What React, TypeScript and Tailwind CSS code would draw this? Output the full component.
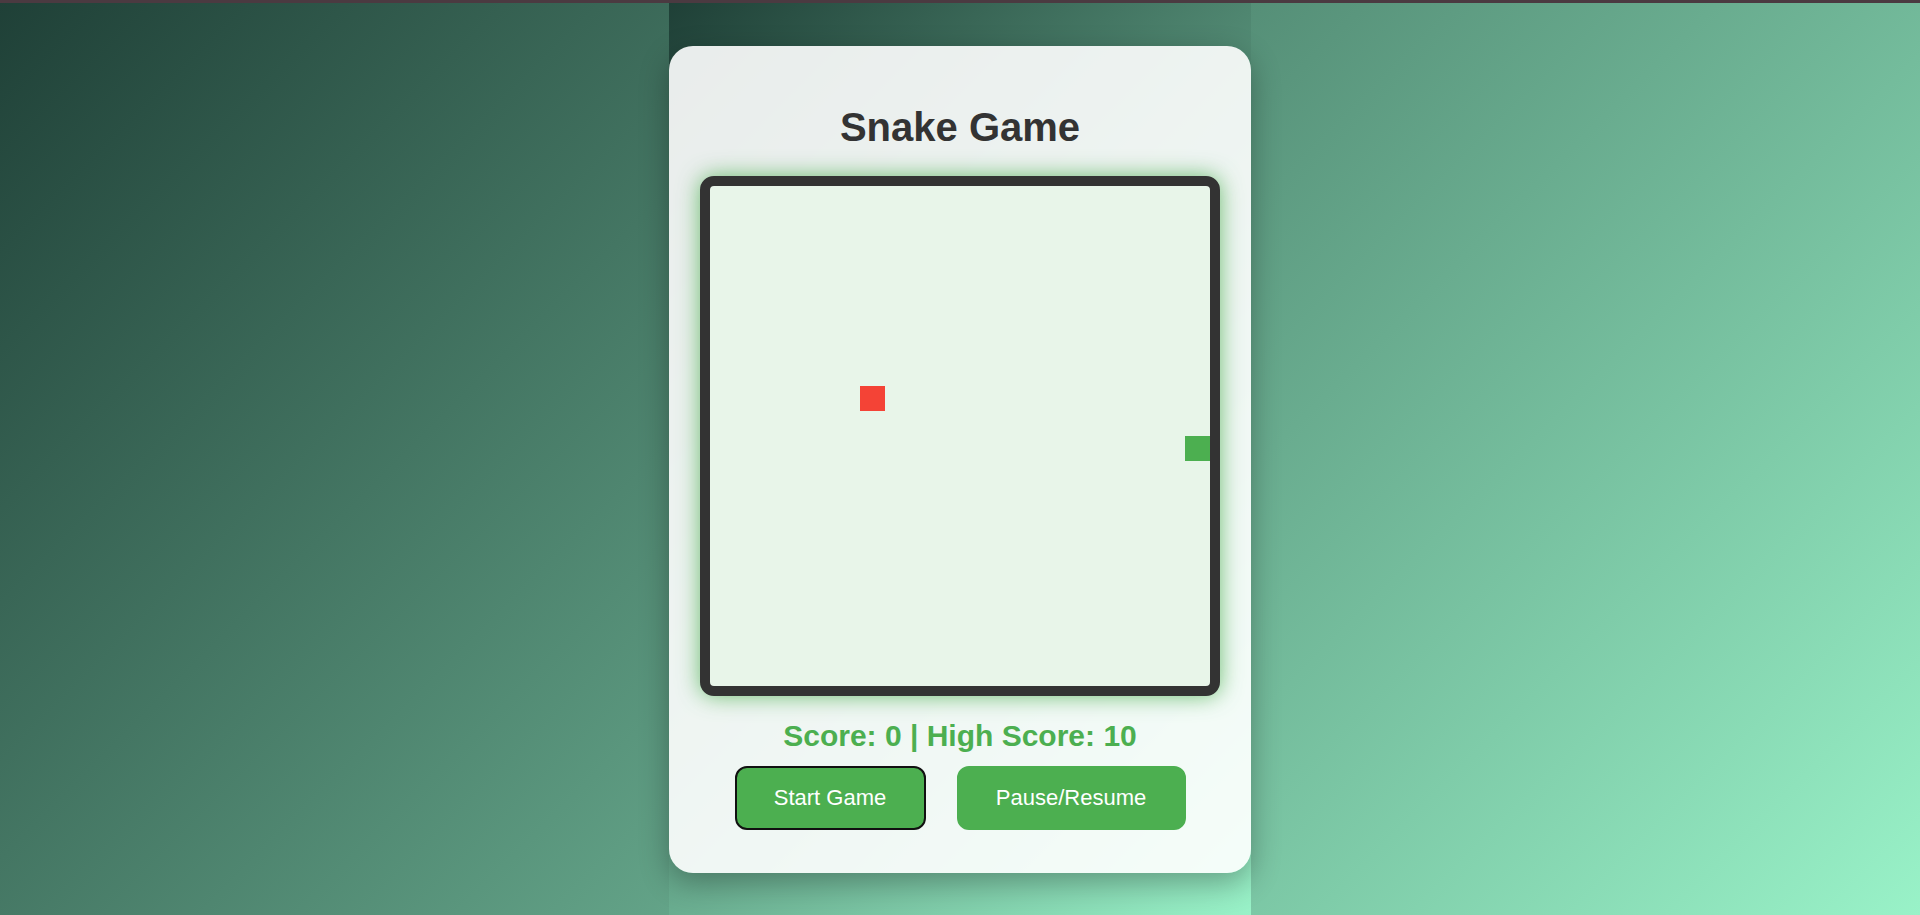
import React from "react";

const CELL = 25;

function Board() {
  const food = { x: 6, y: 8 };
  const snake = [{ x: 19, y: 10 }];

  return (
    <div className="relative w-[520px] h-[520px] shrink-0 rounded-[14px] border-[10px] border-[#333333] bg-[#e8f5e9] shadow-[0_0_22px_rgba(76,175,80,0.8)]">
      <div
        className="absolute w-[25px] h-[25px] bg-[#f44336]"
        style={{ left: food.x * CELL, top: food.y * CELL }}
      />
      {snake.map((part, index) => (
        <div
          key={index}
          className="absolute w-[25px] h-[25px] bg-[#4caf50]"
          style={{ left: part.x * CELL, top: part.y * CELL }}
        />
      ))}
    </div>
  );
}

export default function App() {
  return (
    <div className="h-[915px] overflow-hidden font-['Liberation_Sans',Arial,sans-serif] bg-[linear-gradient(135deg,#1f4037,#99f2c8)]">
      <div className="h-[3px] bg-[#4b3a41]" />
      <div className="mx-auto flex h-[912px] w-[582px] items-center bg-[linear-gradient(135deg,#1f4037,#99f2c8)]">
        <div className="flex h-[827px] w-[582px] flex-col items-center rounded-[24px] bg-white/90 pt-[58px] shadow-[0_10px_30px_rgba(0,0,0,0.3)]">
          <h1 className="mb-[26px] text-[40px] leading-[46px] font-bold text-[#333333]">
            Snake Game
          </h1>
          <Board />
          <div className="mt-[23px] text-[30px] leading-[34px] font-bold text-[#4caf50]">
            Score: 0 | High Score: 10
          </div>
          <div className="mt-[13px] flex flex-row gap-[31px]">
            <button className="h-[64px] w-[191px] rounded-[12px] border-2 border-[#111111] bg-[#4caf50] text-[22px] text-white">
              Start Game
            </button>
            <button className="h-[64px] w-[229px] rounded-[12px] border-2 border-[#4caf50] bg-[#4caf50] text-[22px] text-white">
              Pause/Resume
            </button>
          </div>
        </div>
      </div>
    </div>
  );
}
